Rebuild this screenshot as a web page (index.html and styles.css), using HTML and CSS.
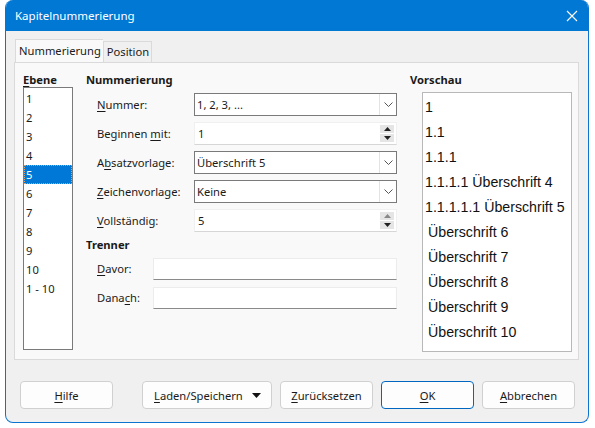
FILE: index.html
```html
<!doctype html>
<html>
<head>
  <meta charset="utf-8">
  <title>Kapitelnummerierung</title>
  <link rel="stylesheet" href="styles.css">
</head>
<body>
<div class="dialog">
  <div class="titlebar">
    <span class="title">Kapitelnummerierung</span>
    <svg class="close" width="12" height="12" viewBox="0 0 12 12"><path d="M1 1L11 11M11 1L1 11" stroke="#fff" stroke-width="1.1" fill="none"/></svg>
  </div>
  <div class="content">
    <div class="tabs">
      <div class="tab active">Nummerierung</div>
      <div class="tab">Position</div>
    </div>
    <div class="tab-panel">
      <div class="level-col">
        <div class="heading"><u>E</u>bene</div>
        <div class="level-list">
          <div class="level">1</div>
          <div class="level">2</div>
          <div class="level">3</div>
          <div class="level">4</div>
          <div class="level selected">5</div>
          <div class="level">6</div>
          <div class="level">7</div>
          <div class="level">8</div>
          <div class="level">9</div>
          <div class="level">10</div>
          <div class="level">1 - 10</div>
        </div>
      </div>
      <div class="settings-col">
        <div class="heading">Nummerierung</div>
        <div class="form">
          <label><u>N</u>ummer:</label>
          <div class="combo"><span>1, 2, 3, ...</span><span class="combo-btn"><svg width="9" height="5" viewBox="0 0 9 5"><path d="M0.5 0.5L4.5 4.5L8.5 0.5" stroke="#555" fill="none"/></svg></span></div>
          <label>Beginnen <u>m</u>it:</label>
          <div class="spin"><span>1</span><span class="spin-btns"><span class="spin-btn"><svg width="7" height="4" viewBox="0 0 7 4"><path d="M0 4L3.5 0L7 4Z" fill="#222"/></svg></span><span class="spin-btn"><svg width="7" height="4" viewBox="0 0 7 4"><path d="M0 0L3.5 4L7 0Z" fill="#222"/></svg></span></span></div>
          <label>A<u>b</u>satzvorlage:</label>
          <div class="combo"><span>Überschrift 5</span><span class="combo-btn"><svg width="9" height="5" viewBox="0 0 9 5"><path d="M0.5 0.5L4.5 4.5L8.5 0.5" stroke="#555" fill="none"/></svg></span></div>
          <label><u>Z</u>eichenvorlage:</label>
          <div class="combo"><span>Keine</span><span class="combo-btn"><svg width="9" height="5" viewBox="0 0 9 5"><path d="M0.5 0.5L4.5 4.5L8.5 0.5" stroke="#555" fill="none"/></svg></span></div>
          <label><u>V</u>ollständig:</label>
          <div class="spin"><span>5</span><span class="spin-btns"><span class="spin-btn"><svg width="7" height="4" viewBox="0 0 7 4"><path d="M0 4L3.5 0L7 4Z" fill="#888"/></svg></span><span class="spin-btn"><svg width="7" height="4" viewBox="0 0 7 4"><path d="M0 0L3.5 4L7 0Z" fill="#222"/></svg></span></span></div>
        </div>
        <div class="heading separator-heading">Trenner</div>
        <div class="form separator-form">
          <label><u>D</u>avor:</label>
          <div class="entry"></div>
          <label>Dana<u>c</u>h:</label>
          <div class="entry"></div>
        </div>
      </div>
      <div class="preview-col">
        <div class="heading">Vorschau</div>
        <div class="preview">
          <div class="preview-line">1</div>
          <div class="preview-line">1.1</div>
          <div class="preview-line">1.1.1</div>
          <div class="preview-line">1.1.1.1 Überschrift 4</div>
          <div class="preview-line">1.1.1.1.1 Überschrift 5</div>
          <div class="preview-line indent">Überschrift 6</div>
          <div class="preview-line indent">Überschrift 7</div>
          <div class="preview-line indent">Überschrift 8</div>
          <div class="preview-line indent">Überschrift 9</div>
          <div class="preview-line indent">Überschrift 10</div>
        </div>
      </div>
    </div>
    <div class="buttons">
      <button class="btn"><u>H</u>ilfe</button>
      <button class="btn menu-btn"><span><u>L</u>aden/Speichern</span><svg width="9" height="5" viewBox="0 0 9 5"><path d="M0 0H9L4.5 5Z" fill="#111"/></svg></button>
      <button class="btn"><u>Z</u>urücksetzen</button>
      <button class="btn default"><u>O</u>K</button>
      <button class="btn"><u>A</u>bbrechen</button>
    </div>
  </div>
</div>
</body>
</html>
```

FILE: styles.css
```css
html,
body {
  margin: 0;
  background: #ffffff;
  height: 100%;
}
body {
  font-family: "Noto Sans", sans-serif;
  font-size: 11.2px;
  color: #1a1a1a;
}
u {
  text-decoration-thickness: 1px;
  text-underline-offset: 2px;
}
/* the window frame */
.dialog {
  margin-left: 5px;
  width: 582px;
  height: 422px;
  border: 1px solid #0a74d0;
  border-top: none;
  border-radius: 8px;
  background: #f0f0f0;
  overflow: hidden;
}
.titlebar {
  height: 31px;
  background: #0078d4;
  color: #fff;
  display: flex;
  align-items: center;
  justify-content: space-between;
  padding: 0 10px 0 9px;
}
.title {
  font-size: 11.5px;
}
.content {
  padding: 9px 9px 0 8px;
}
/* tab strip */
.tabs {
  display: flex;
  align-items: flex-end;
  height: 22px;
  padding-left: 1px;
}
.tab {
  height: 20px;
  line-height: 20px;
  padding: 0 2px 0 3px;
  border: 1px solid #dadada;
  border-bottom: none;
  background: #f0f0f0;
}
.tab.active {
  height: 22px;
  line-height: 22px;
  background: #f9f9f9;
  border-right: none;
}
.tab-panel {
  height: 277px;
  border: 1px solid #dadada;
  background: #f9f9f9;
  display: flex;
  padding: 10px 6px 9px 8px;
}
.heading {
  font-weight: bold;
  height: 14px;
  line-height: 14px;
}
/* level list */
.level-col {
  width: 50px;
  display: flex;
  flex-direction: column;
}
.level-list {
  flex-grow: 1;
  border: 1px solid #7a7a7a;
  background: #fff;
  padding-top: 1px;
}
.level {
  height: 19px;
  line-height: 19px;
  padding-left: 2px;
}
.level.selected {
  background: #0078d7;
  color: #fff;
  outline: 1px dotted #e8a060;
  outline-offset: -1px;
}
/* numbering settings */
.settings-col {
  width: 311px;
  margin-left: 13px;
}
.form {
  display: grid;
  grid-template-columns: 97px 203px;
  row-gap: 6px;
  margin-top: 6px;
  padding-left: 11px;
}
.form label {
  display: block;
  line-height: 23px;
  white-space: nowrap;
}
.combo,
.spin,
.entry {
  height: 23px;
  box-sizing: border-box;
  display: flex;
  align-items: center;
  background: #fff;
}
.combo {
  border: 1px solid #7a7a7a;
  padding-left: 2px;
  justify-content: space-between;
}
.combo-btn {
  width: 16px;
  height: 21px;
  border-left: 1px solid #e3e3e3;
  display: flex;
  align-items: center;
  justify-content: center;
}
.spin {
  border: 1px solid #f0f0f0;
  border-bottom-color: #d6d6d6;
  padding-left: 3px;
  justify-content: space-between;
}
.spin-btns {
  display: flex;
  flex-direction: column;
  gap: 1px;
  margin-right: 2px;
}
.spin-btn {
  width: 14px;
  height: 8px;
  background: #e5e5e5;
  display: flex;
  align-items: center;
  justify-content: center;
}
.separator-heading {
  margin-top: 6px;
}
.separator-form {
  grid-template-columns: 56px 244px;
  row-gap: 7px;
  margin-top: 6px;
}
.separator-form label {
  line-height: 22px;
}
.entry {
  height: 22px;
  border: 1px solid #ececec;
  border-bottom-color: #8a8a8a;
}
/* preview */
.preview-col {
  margin-left: 13px;
  width: 162px;
  display: flex;
  flex-direction: column;
}
.preview {
  margin-top: 5px;
  margin-left: 12px;
  flex-grow: 1;
  margin-bottom: -2px;
  border: 1px solid #b8b8b8;
  background: #fff;
  padding-top: 2px;
  font-family: "Liberation Sans", sans-serif;
  font-size: 14.2px;
  color: #111;
}
.preview-line {
  height: 25px;
  line-height: 25px;
  padding-left: 2px;
  white-space: nowrap;
}
.preview-line.indent {
  padding-left: 5px;
}
/* bottom buttons */
.buttons {
  display: flex;
  margin-top: 21px;
  padding-left: 6px;
}
.btn {
  font: inherit;
  color: #1a1a1a;
  height: 28px;
  width: 93px;
  flex-shrink: 0;
  border: 1px solid #d0d0d0;
  border-radius: 4px;
  background: #fdfdfd;
  margin-right: 8px;
  padding: 0;
}
.btn:first-child {
  margin-right: 29px;
}
.btn:last-child {
  margin-right: 0;
}
.menu-btn {
  width: 130px;
  display: flex;
  align-items: center;
  justify-content: space-between;
  padding: 0 10px 0 11px;
}
.btn.default {
  border-color: #0067c0;
}
```
